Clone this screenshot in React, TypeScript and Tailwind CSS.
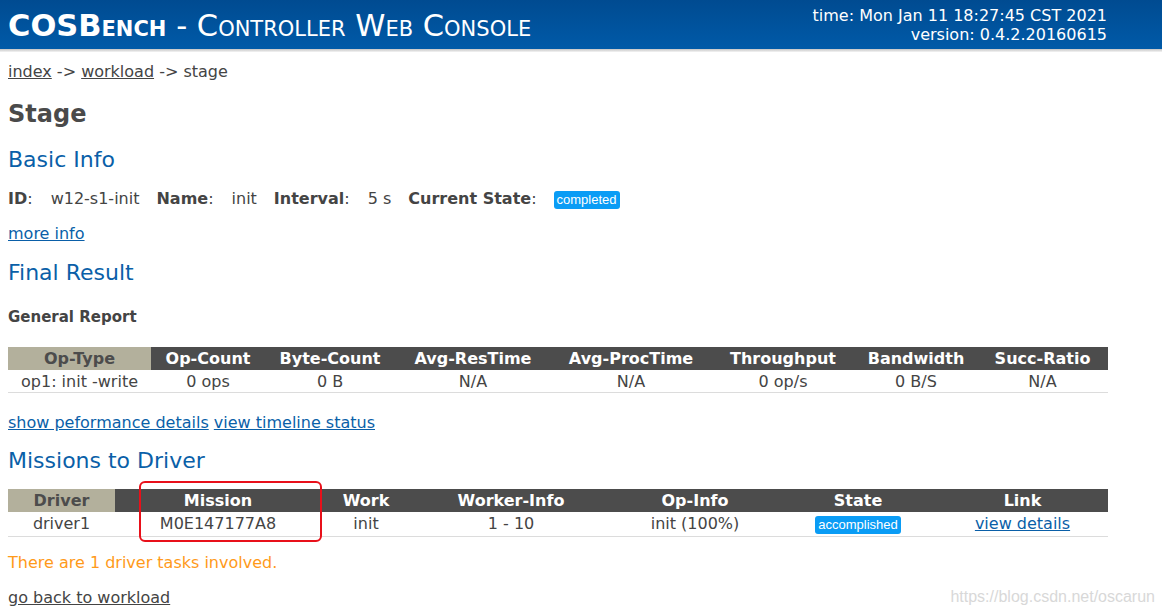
import React from 'react';

const font = "font-['DejaVu_Sans',Verdana,sans-serif]";

const opCols = [
  { title: 'Op-Type', w: 'w-[143px]', value: 'op1: init -write' },
  { title: 'Op-Count', w: 'w-[114px]', value: '0 ops' },
  { title: 'Byte-Count', w: 'w-[130px]', value: '0 B' },
  { title: 'Avg-ResTime', w: 'w-[156px]', value: 'N/A' },
  { title: 'Avg-ProcTime', w: 'w-[160px]', value: 'N/A' },
  { title: 'Throughput', w: 'w-[144px]', value: '0 op/s' },
  { title: 'Bandwidth', w: 'w-[122px]', value: '0 B/S' },
  { title: 'Succ-Ratio', w: 'w-[131px]', value: 'N/A' },
];

const driverCols = [
  { title: 'Driver', w: 'w-[107px]' },
  { title: 'Mission', w: 'w-[206px]' },
  { title: 'Work', w: 'w-[90px]' },
  { title: 'Worker-Info', w: 'w-[200px]' },
  { title: 'Op-Info', w: 'w-[168px]' },
  { title: 'State', w: 'w-[158px]' },
  { title: 'Link', w: 'w-[171px]' },
];

const Badge: React.FC<{ text: string }> = ({ text }) => (
  <span className="inline-block rounded-[3px] bg-[#0a9cf5] px-[3px] font-['Liberation_Sans',Arial,sans-serif] text-[13px] leading-[18px] text-white">
    {text}
  </span>
);

const HeadRow: React.FC<{ cols: { title: string; w: string }[] }> = ({ cols }) => (
  <tr className="h-[23px]">
    {cols.map((c, i) => (
      <th
        key={c.title}
        className={`${c.w} p-0 text-center text-[16px] font-bold leading-[23px] ${
          i === 0 ? 'bg-[#b3b09c] text-[#4c4c4c]' : 'bg-[#4c4c4c] text-white'
        }`}
      >
        {c.title}
      </th>
    ))}
  </tr>
);

const InfoItem: React.FC<{ label: string; children: React.ReactNode }> = ({ label, children }) => (
  <>
    <span className="font-bold">{label}</span>
    <span>:</span>
    <span className="ml-[18px] mr-[17px]">{children}</span>
  </>
);

export default function App() {
  return (
    <div className={`relative min-h-[615px] bg-white text-[16px] text-[#444] ${font}`}>
      {/* banner */}
      <div className="flex h-[49px] items-center justify-between bg-gradient-to-b from-[#004b91] to-[#005aa8] pl-[8px] pr-[55px] text-white">
        <div className="mt-[2px] text-[30.5px] leading-[34px] [font-variant:small-caps]">
          <span className="font-bold">COSBench</span> - Controller Web Console
        </div>
        <div className="mt-[1px] text-right text-[16px] leading-[19px]">
          <div>time: Mon Jan 11 18:27:45 CST 2021</div>
          <div>version: 0.4.2.20160615</div>
        </div>
      </div>
      <div className="h-[3px] bg-gradient-to-b from-[#c4c4c4] to-[#f4f4f4]" />

      <div className="px-[8px]">
        <div className="mt-[10px] leading-[20px]">
          <a className="underline text-[#444]">index</a> -&gt; <a className="underline text-[#444]">workload</a> -&gt; stage
        </div>

        <h1 className="mt-[18px] text-[24px] font-bold leading-[28px] text-[#4a4a4a]">Stage</h1>

        <h2 className="mt-[19px] text-[22px] leading-[26px] text-[#0a5fa8]">Basic Info</h2>

        <div className="mt-[16px] flex h-[20px] items-center leading-[20px]">
          <InfoItem label="ID">w12-s1-init</InfoItem>
          <InfoItem label="Name">init</InfoItem>
          <InfoItem label="Interval">5 s</InfoItem>
          <span className="font-bold">Current State</span>
          <span>:</span>
          <span className="ml-[17px]">
            <Badge text="completed" />
          </span>
        </div>

        <div className="mt-[15px] leading-[20px]">
          <a className="text-[#0a5fa8] underline">more info</a>
        </div>

        <h2 className="mt-[16px] text-[22px] leading-[26px] text-[#0a5fa8]">Final Result</h2>

        <h3 className="mt-[21px] text-[15px] font-bold leading-[20px] text-[#444]">General Report</h3>

        <table className="mt-[20px] w-[1100px] table-fixed border-collapse">
          <thead>
            <HeadRow cols={opCols} />
          </thead>
          <tbody>
            <tr className="h-[22px] border-b border-[#dcdcdc]">
              {opCols.map((c) => (
                <td key={c.title} className="p-0 pt-[2px] text-center leading-[20px]">
                  {c.value}
                </td>
              ))}
            </tr>
          </tbody>
        </table>

        <div className="mt-[20px] leading-[20px] text-[#0a5fa8]">
          <a className="underline">show peformance details</a> <a className="underline">view timeline status</a>
        </div>

        <h2 className="mt-[15px] text-[22px] leading-[26px] text-[#0a5fa8]">Missions to Driver</h2>

        <div className="relative mt-[15px] w-[1100px]">
          <table className="w-[1100px] table-fixed border-collapse">
            <thead>
              <HeadRow cols={driverCols} />
            </thead>
            <tbody>
              <tr className="h-[24px] border-b border-[#dcdcdc]">
                <td className="p-0 text-center">driver1</td>
                <td className="p-0 text-center">M0E147177A8</td>
                <td className="p-0 text-center">init</td>
                <td className="p-0 text-center">1 - 10</td>
                <td className="p-0 text-center">init (100%)</td>
                <td className="p-0 text-center">
                  <Badge text="accomplished" />
                </td>
                <td className="p-0 text-center">
                  <a className="text-[#0a5fa8] underline">view details</a>
                </td>
              </tr>
            </tbody>
          </table>
          {/* annotation frame */}
          <div className="absolute left-[131px] top-[-8px] h-[61px] w-[183px] rounded-[6px] border-2 border-[#e8101a]" />
        </div>

        <div className="mt-[16px] leading-[20px] text-[#ff9a1a]">There are 1 driver tasks involved.</div>

        <div className="mt-[15px] leading-[20px]">
          <a className="text-[#444] underline">go back to workload</a>
        </div>
      </div>

      <div className="absolute right-[7px] top-[587px] font-['Liberation_Sans',Arial,sans-serif] text-[16px] leading-[20px] text-[#d8d8d8]">
        https://blog.csdn.net/oscarun
      </div>
    </div>
  );
}
